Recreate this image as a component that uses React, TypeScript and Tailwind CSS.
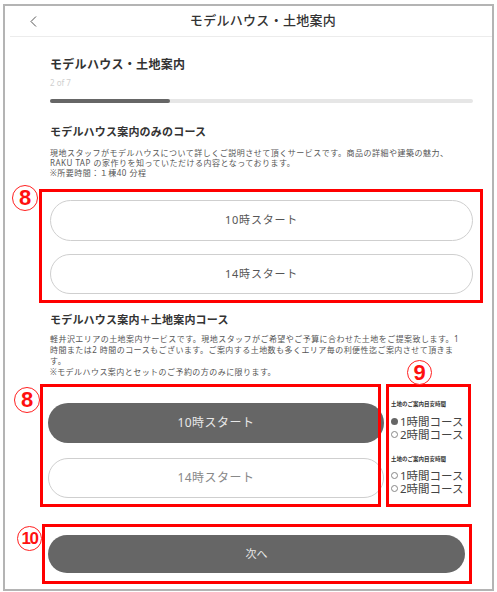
import React from 'react';

const Marker: React.FC<{ n: string; className: string }> = ({ n, className }) => (
  <div
    className={`absolute flex items-center justify-center rounded-full border border-[#ff2020] bg-white/70 font-bold text-[#ff1010] leading-none font-['Liberation_Sans',sans-serif] ${className}`}
  >
    {n}
  </div>
);

const Radio: React.FC<{ checked?: boolean; label: string }> = ({ checked, label }) => (
  <div className="flex items-center gap-[2px] h-[13px] text-[11.5px] leading-[13px] text-[#444]">
    <span
      className={`w-[7px] h-[7px] rounded-full shrink-0 ${checked ? 'bg-[#666]' : 'border border-[#888]'}`}
    />
    <span className="leading-[13px]">{label}</span>
  </div>
);

const App: React.FC = () => {
  return (
    <div className="relative w-[497px] h-[592px] bg-white font-['Noto_Sans','Noto_Sans_CJK_JP',sans-serif] overflow-hidden">
      <div className="ml-[3px] mt-[4px] w-[491px] h-[587px] border-2 border-[#b4b4b4]">
        {/* header */}
        <div className="ml-[5px] h-[31px] flex items-center border-b border-[#ececec]">
          <div className="pl-[20px] w-[28px]">
            <svg width="7" height="11" viewBox="0 0 7 11" fill="none">
              <polyline points="6,0.5 1,5.5 6,10.5" stroke="#555" strokeWidth="1" />
            </svg>
          </div>
          <div className="flex-1 text-center pr-[4px] text-[13px] font-medium text-[#333] tracking-[0.3px]">
            モデルハウス・土地案内
          </div>
        </div>

        <div className="ml-[45px] w-[423px]">
          <h1 className="mt-[20px] text-[12px] leading-[16px] font-bold text-[#333] tracking-[0.3px]">
            モデルハウス・土地案内
          </h1>
          <p className="mt-[5px] text-[8px] leading-[10px] text-[#cfcfcf]">2 of 7</p>
          <div className="mt-[11px] h-[4px] rounded-full bg-[#e6e6e6]">
            <div className="h-full w-[120px] rounded-full bg-[#666]" />
          </div>

          {/* course 1 */}
          <h2 className="mt-[22px] text-[11px] leading-[14px] font-bold text-[#333] tracking-[0.2px]">
            モデルハウス案内のみのコース
          </h2>
          <div className="mt-[9px] text-[8px] leading-[10px] text-[#555] tracking-[0.5px]">
            <p>現地スタッフがモデルハウスについて詳しくご説明させて頂くサービスです。商品の詳細や建築の魅力、</p>
            <p>RAKU TAP の家作りを知っていただける内容となっております。</p>
            <p>※所要時間：１棟40 分程</p>
          </div>
          <div className="mt-[22px] flex flex-col gap-[13px]">
            <button className="h-[41px] w-full rounded-full border border-[#cfcfcf] text-[11px] text-[#555] tracking-[0.8px]">
              10時スタート
            </button>
            <button className="h-[40px] w-full rounded-full border border-[#cfcfcf] text-[11px] text-[#555] tracking-[0.8px]">
              14時スタート
            </button>
          </div>

          {/* course 2 */}
          <h2 className="mt-[19px] text-[11px] leading-[14px] font-bold text-[#333] tracking-[0.2px]">
            モデルハウス案内＋土地案内コース
          </h2>
          <div className="mt-[6px] text-[8px] leading-[11px] text-[#555] tracking-[0.45px]">
            <p>軽井沢エリアの土地案内サービスです。現地スタッフがご希望やご予算に合わせた土地をご提案致します。1</p>
            <p>時間または2 時間のコースもございます。ご案内する土地数も多くエリア毎の利便性迄ご案内させて頂きま</p>
            <p>す。</p>
            <p>※モデルハウス案内とセットのご予約の方のみに限ります。</p>
          </div>

          <div className="mt-[21px] flex">
            <div className="-ml-[2px] w-[336px] pt-[5px] flex flex-col gap-[15px]">
              <button className="h-[40px] w-full rounded-full bg-[#666] text-[12px] text-[#e8e8e8] tracking-[0.5px]">
                10時スタート
              </button>
              <button className="h-[40px] w-full rounded-full border border-[#cfcfcf] text-[12px] text-[#888] tracking-[0.5px]">
                14時スタート
              </button>
            </div>
            <div className="ml-[7px] pt-[2px]">
              <p className="text-[5.5px] leading-[8px] font-bold text-[#333]">土地のご案内目安時間</p>
              <div className="mt-[7px]">
                <Radio checked label="1時間コース" />
                <Radio label="2時間コース" />
              </div>
              <p className="mt-[14px] text-[5.5px] leading-[8px] font-bold text-[#333]">土地のご案内目安時間</p>
              <div className="mt-[6px]">
                <Radio label="1時間コース" />
                <Radio label="2時間コース" />
              </div>
            </div>
          </div>

          <button className="mt-[37px] -ml-[2px] h-[38px] w-[417px] rounded-full bg-[#666] text-[11px] text-[#e8e8e8]">
            次へ
          </button>
        </div>
      </div>

      {/* annotations */}
      <div className="absolute left-[39px] top-[189px] w-[444px] h-[114px] border-[3px] border-[#ff0000]" />
      <div className="absolute left-[40px] top-[384px] w-[341px] h-[123px] border-[3px] border-[#ff0000]" />
      <div className="absolute left-[386px] top-[384px] w-[85px] h-[123px] border-[3px] border-[#ff0000]" />
      <div className="absolute left-[42px] top-[524px] w-[430px] h-[60px] border-[3px] border-[#ff0000]" />

      <Marker n="8" className="left-[12px] top-[185px] w-[26px] h-[26px] text-[22px]" />
      <Marker n="8" className="left-[14px] top-[387px] w-[26px] h-[26px] text-[22px]" />
      <Marker n="9" className="left-[407px] top-[360px] w-[25px] h-[25px] text-[22px]" />
      <Marker n="10" className="left-[17px] top-[526px] w-[25px] h-[25px] text-[17px] tracking-[-1.5px]" />
    </div>
  );
};

export default App;
